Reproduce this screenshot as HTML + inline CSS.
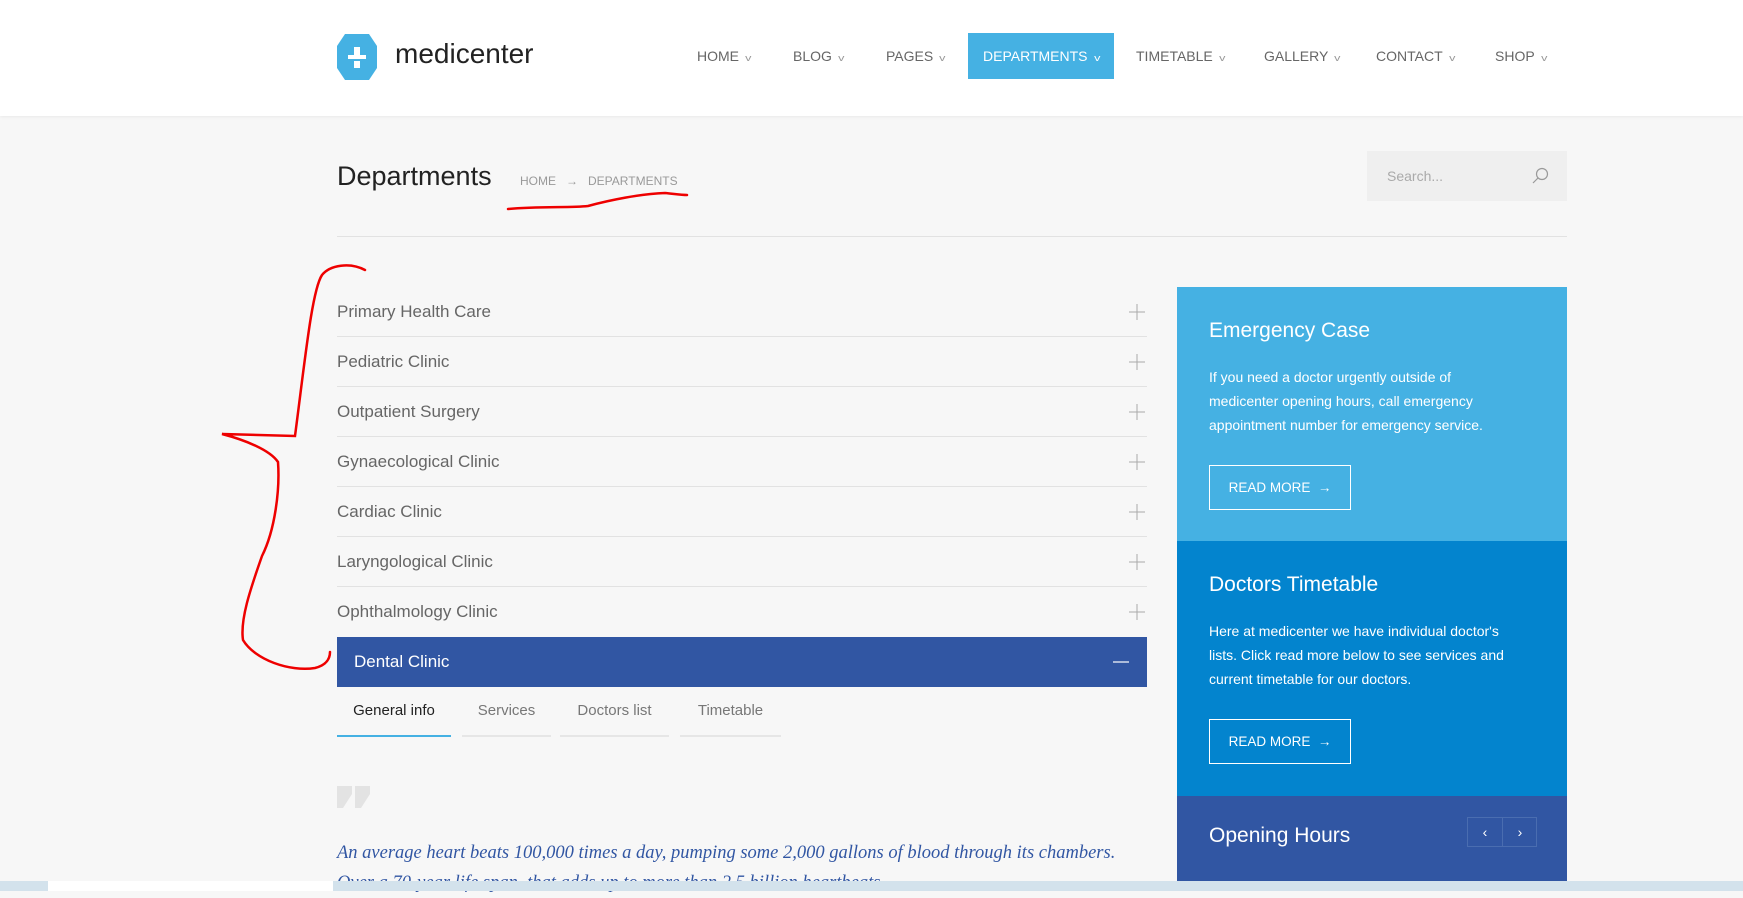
<!DOCTYPE html>
<html><head><meta charset="utf-8"><style>
*{margin:0;padding:0;box-sizing:border-box}
body{width:1743px;height:891px;overflow:hidden;background:#f7f7f7;font-family:"Liberation Sans",sans-serif;position:relative}
.hdr{position:absolute;left:0;top:0;width:1743px;height:116px;background:#fff;box-shadow:0 1px 3px rgba(0,0,0,.06)}
.logo{position:absolute;left:337px;top:34px}
.brand{position:absolute;left:395px;top:38px;font-size:28px;color:#222}
.nav{position:absolute;top:33px;height:46px;line-height:46px;font-size:14px;color:#666}
.nav span.c{font-size:9px;color:#999;margin-left:7px;display:inline-block;transform:scaleX(1.4)}
.nav.act{background:#45b1e3;color:#fff;padding:0 15px}
.nav.act span.c{color:#fff}
.title{position:absolute;left:337px;top:161px;font-size:27px;color:#222}
.bc{position:absolute;left:520px;top:174px;font-size:12px;color:#999}
.search{position:absolute;left:1367px;top:151px;width:200px;height:50px;background:#efefef;color:#aaa;font-size:14px;line-height:50px;padding-left:20px}
.sep{position:absolute;left:337px;top:236px;width:1230px;height:1px;background:#e2e2e2}
.acc{position:absolute;left:337px;width:810px;height:50px;border-bottom:1px solid #e2e2e2;font-size:17px;color:#666;line-height:50px}
.acc svg{position:absolute;right:2px;top:17px}
.dent{position:absolute;left:337px;top:637px;width:810px;height:50px;background:#3156a3;color:#fff;font-size:17px;line-height:50px;padding-left:17px}
.tab{position:absolute;top:695px;height:42px;font-size:15px;color:#777;text-align:center;line-height:32px;border-bottom:2px solid #e6e6e6}
.quote{position:absolute;left:337px;top:838px;font-family:"Liberation Serif",serif;font-style:italic;font-size:18.5px;color:#3156a3;line-height:30px}
.side{position:absolute;left:1177px;width:390px;color:#fff;padding:0 32px}
.side h3{font-weight:normal;font-size:21px;margin-top:32px}
.side p{font-size:14px;line-height:24px;margin-top:22px;width:300px}
.btn{display:inline-block;margin-top:28px;border:1px solid #fff;width:142px;height:45px;line-height:43px;text-align:center;font-size:13.5px}
.bar{position:absolute;left:0;top:881px;width:1743px;height:10px;background:#d3e2ec;z-index:10}
</style></head><body>
<div class="hdr">
<svg class="logo" width="40" height="46" viewBox="0 0 40 46"><polygon points="8,0 32,0 40,12 40,34 32,46 8,46 0,34 0,12" fill="#45b1e3"/><rect x="17" y="13" width="6" height="8" fill="#fff"/><rect x="11" y="21" width="18" height="4" fill="#fff"/><rect x="17" y="27" width="6" height="7" fill="#fff"/></svg>
<div class="brand">medicenter</div>
<div class="nav" style="left:697px">HOME<span class="c">v</span></div>
<div class="nav" style="left:793px">BLOG<span class="c">v</span></div>
<div class="nav" style="left:886px">PAGES<span class="c">v</span></div>
<div class="nav act" style="left:968px;width:146px">DEPARTMENTS<span class="c">v</span></div>
<div class="nav" style="left:1136px">TIMETABLE<span class="c">v</span></div>
<div class="nav" style="left:1264px">GALLERY<span class="c">v</span></div>
<div class="nav" style="left:1376px">CONTACT<span class="c">v</span></div>
<div class="nav" style="left:1495px">SHOP<span class="c">v</span></div>
</div>
<div class="title">Departments</div>
<div class="bc" style="left:520px">HOME &nbsp;&nbsp;→&nbsp;&nbsp; DEPARTMENTS</div>
<div class="search">Search...<svg style="position:absolute;right:18px;top:16px" width="18" height="18" viewBox="0 0 18 18"><circle cx="11" cy="7" r="5.5" fill="none" stroke="#999" stroke-width="1.2"/><path d="M7 11 L2 16" stroke="#999" stroke-width="1.2"/></svg></div>
<div class="sep"></div>
<div class="acc" style="top:287px">Primary Health Care<svg width="16" height="16"><path d="M8 0V16M0 8H16" stroke="#aaa" stroke-width="1"/></svg></div>
<div class="acc" style="top:337px">Pediatric Clinic<svg width="16" height="16"><path d="M8 0V16M0 8H16" stroke="#aaa" stroke-width="1"/></svg></div>
<div class="acc" style="top:387px">Outpatient Surgery<svg width="16" height="16"><path d="M8 0V16M0 8H16" stroke="#aaa" stroke-width="1"/></svg></div>
<div class="acc" style="top:437px">Gynaecological Clinic<svg width="16" height="16"><path d="M8 0V16M0 8H16" stroke="#aaa" stroke-width="1"/></svg></div>
<div class="acc" style="top:487px">Cardiac Clinic<svg width="16" height="16"><path d="M8 0V16M0 8H16" stroke="#aaa" stroke-width="1"/></svg></div>
<div class="acc" style="top:537px">Laryngological Clinic<svg width="16" height="16"><path d="M8 0V16M0 8H16" stroke="#aaa" stroke-width="1"/></svg></div>
<div class="acc" style="top:587px;border-bottom:none">Ophthalmology Clinic<svg width="16" height="16"><path d="M8 0V16M0 8H16" stroke="#aaa" stroke-width="1"/></svg></div>
<div class="dent">Dental Clinic<svg style="position:absolute;right:18px;top:24px" width="16" height="2"><path d="M0 1H16" stroke="#fff" stroke-width="1.2"/></svg></div>
<div class="tab" style="left:337px;width:114px;color:#222;border-color:#45b1e3">General info</div>
<div class="tab" style="left:462px;width:89px">Services</div>
<div class="tab" style="left:560px;width:109px">Doctors list</div>
<div class="tab" style="left:680px;width:101px">Timetable</div>
<svg style="position:absolute;left:337px;top:786px" width="34" height="24"><polygon points="0,0 15,0 15,8 6,22 0,22" fill="#e3e3e3"/><polygon points="18,0 33,0 33,8 24,22 18,22" fill="#e3e3e3"/></svg>
<div class="quote">An average heart beats 100,000 times a day, pumping some 2,000 gallons of blood through its chambers.<br>Over a 70-year life span, that adds up to more than 2.5 billion heartbeats.</div>
<div class="side" style="top:287px;height:254px;background:#45b1e3"><h3>Emergency Case</h3><p>If you need a doctor urgently outside of medicenter opening hours, call emergency appointment number for emergency service.</p><div class="btn">READ MORE &nbsp;→</div></div>
<div class="side" style="top:541px;height:255px;background:#0384ce"><h3>Doctors Timetable</h3><p>Here at medicenter we have individual doctor's lists. Click read more below to see services and current timetable for our doctors.</p><div class="btn">READ MORE &nbsp;→</div></div>
<div class="side" style="top:796px;height:90px;background:#3156a3"><h3 style="margin-top:28px">Opening Hours</h3>
<div style="position:absolute;left:290px;top:21px;width:70px;height:30px;border:1px solid #4a6db0;font-size:14px;line-height:28px"><span style="position:absolute;left:0;width:35px;text-align:center;border-right:1px solid #4a6db0">‹</span><span style="position:absolute;left:35px;width:34px;text-align:center">›</span></div></div>
<svg style="position:absolute;left:0;top:0" width="1743" height="891"><g fill="none" stroke="#e00" stroke-width="2.5" stroke-linecap="round">
<path d="M365 270 C350 262 330 265 322 275 C312 290 305 360 295 436 L222 434 C245 440 270 450 278 462 C280 490 275 530 262 556 C250 590 240 620 243 640 C255 660 290 672 315 668 C327 665 330 658 330 652"/>
<path d="M508 209 C540 206 570 208 588 206 C610 200 640 194 665 193 C675 194 682 195 687 195"/>
</g></svg>
<div class="bar"><div style="position:absolute;left:48px;top:0;width:285px;height:10px;background:#fff"></div></div>
</body></html>
